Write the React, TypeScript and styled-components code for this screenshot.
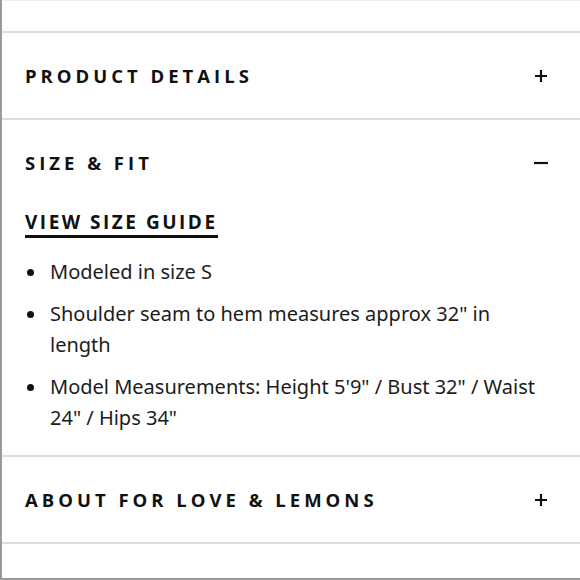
import React from "react";
import styled, { createGlobalStyle } from "styled-components";

const Global = createGlobalStyle`
  html, body { margin: 0; padding: 0; background: #fff; }
  body { width: 580px; height: 580px; overflow: hidden; }
`;

const Page = styled.div`
  width: 580px;
  height: 580px;
  box-sizing: border-box;
  border-left: 2px solid #9a9a9a;
  border-bottom: 2px solid #9a9a9a;
  overflow: hidden;
  background: #fff;
`;

const TopSpacer = styled.div`
  height: 31px;
  border-top: 1px solid #eeeeee;
  box-sizing: border-box;
`;

const Section = styled.section`
  border-top: 2px solid #dcdcdc;
`;

const Header = styled.div`
  height: 85px;
  display: flex;
  align-items: center;
  justify-content: space-between;
  padding: 0 32px 0 23px;
`;

const Title = styled.h2`
  margin: 0;
  font-family: "Open Sans", "Liberation Sans", sans-serif;
  font-weight: 700;
  font-size: 18.5px;
  line-height: 22px;
  letter-spacing: 4px;
  color: #111;
`;

const Icon = styled.svg`
  width: 14px;
  height: 14px;
  flex: none;
`;

const Body = styled.div`
  padding: 6px 28px 22px 23px;
`;

const GuideLink = styled.a`
  display: inline-block;
  font-family: "Open Sans", "Liberation Sans", sans-serif;
  font-weight: 700;
  font-size: 19px;
  line-height: 22px;
  letter-spacing: 2.5px;
  color: #111;
  text-decoration: none;
  border-bottom: 3px solid #111;
  padding-bottom: 2px;
`;

const List = styled.ul`
  margin: 18px 0 0;
  padding: 0;
  list-style: none;
  display: flex;
  flex-direction: column;
  gap: 11px;
  font-family: "Noto Sans", "Open Sans", sans-serif;
  font-size: 20px;
  line-height: 31px;
  color: #1c1c1c;
`;

const Item = styled.li`
  position: relative;
  padding-left: 25px;
  &::before {
    content: "";
    position: absolute;
    left: 2px;
    top: 13px;
    width: 7px;
    height: 7px;
    border-radius: 50%;
    background: #111;
  }
`;

const Plus = () => (
  <Icon viewBox="0 0 14 14">
    <path d="M7 1v12M1 7h12" stroke="#111" strokeWidth="2.2" />
  </Icon>
);
const Minus = () => (
  <Icon viewBox="0 0 14 14">
    <path d="M0 7h14" stroke="#111" strokeWidth="2.2" />
  </Icon>
);

export default function App() {
  return (
    <>
      <Global />
      <Page>
        <TopSpacer />
        <Section>
          <Header>
            <Title>PRODUCT DETAILS</Title>
            <Plus />
          </Header>
        </Section>
        <Section>
          <Header>
            <Title>SIZE &amp; FIT</Title>
            <Minus />
          </Header>
          <Body>
            <GuideLink href="#">VIEW SIZE GUIDE</GuideLink>
            <List>
              <Item>Modeled in size S</Item>
              <Item>Shoulder seam to hem measures approx 32" in length</Item>
              <Item>Model Measurements: Height 5'9" / Bust 32" / Waist 24" / Hips 34"</Item>
            </List>
          </Body>
        </Section>
        <Section>
          <Header>
            <Title>ABOUT FOR LOVE &amp; LEMONS</Title>
            <Plus />
          </Header>
        </Section>
        <Section>
          <Header>
            <Title>FREE SHIPPING &amp; RETURNS</Title>
            <Plus />
          </Header>
        </Section>
      </Page>
    </>
  );
}
